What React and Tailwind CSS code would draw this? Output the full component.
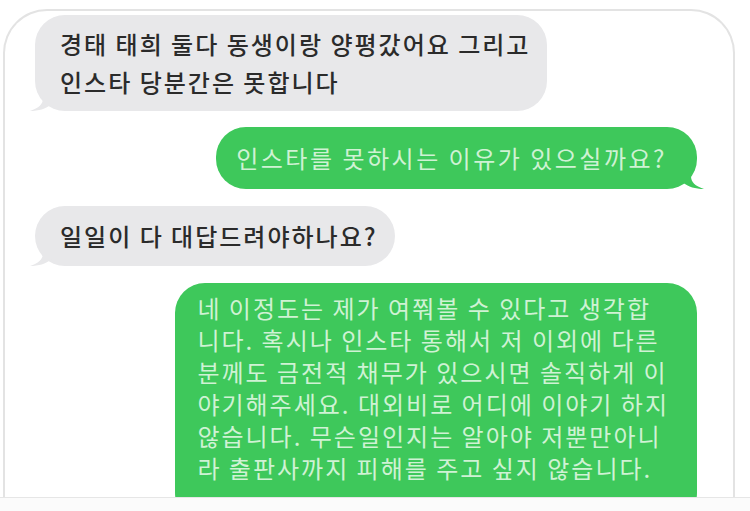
import React from "react";

const font = { fontFamily: '"Noto Sans CJK KR", "Noto Sans", sans-serif' };

const Tail = ({ color, side }) => (
    <svg
        width="24"
        height="22"
        viewBox="0 0 24 22"
        className={
            side === "left"
                ? "absolute -left-[6px] -bottom-[1px]"
                : "absolute -right-[8px] -bottom-[1px] -scale-x-100"
        }
    >
        <path d="M14 0 L14 8 C14 14 10 18 1 21 C10 21 16 19 23 14 L23 0 Z" fill={color} />
    </svg>
);

const Received = ({ lines, className = "" }) => (
    <div className={`relative self-start rounded-[30px] bg-[#e8e8ea] pl-[25px] pr-[17px] text-[24px] font-medium leading-[38px] tracking-[2px] text-[#2b2b2b] ${className}`}>
        {lines.map((l) => (
            <div key={l} className="whitespace-nowrap">{l}</div>
        ))}
        <Tail color="#e8e8ea" side="left" />
    </div>
);

const Sent = ({ lines, className = "", tail = true }) => (
    <div className={`relative self-end rounded-[30px] bg-[#3ec85b] text-[#cff2d4] ${className}`}>
        {lines.map((l) => (
            <div key={l} className="whitespace-nowrap">{l}</div>
        ))}
        {tail && <Tail color="#3ec85b" side="right" />}
    </div>
);

export default function App() {
    return (
        <div className="flex h-[511px] w-[750px] flex-col overflow-hidden bg-white" style={font}>
            <div className="ml-[3px] mt-[9px] h-[488px] w-[732px] overflow-hidden rounded-t-[44px] border-2 border-b-0 border-[#e3e3e3]">
                <div className="flex flex-col pl-[30px] pr-[36px] pt-[4px]">
                    <Received
                        className="py-[10px]"
                        lines={["경태 태희 둘다 동생이랑 양평갔어요 그리고", "인스타 당분간은 못합니다"]}
                    />
                    <Sent
                        className="mt-[16px] py-[12px] pl-[20px] pr-[30px] text-[24px] leading-[38px] tracking-[2.5px]"
                        lines={["인스타를 못하시는 이유가 있으실까요?"]}
                    />
                    <Received className="mt-[17px] py-[11px]" lines={["일일이 다 대답드려야하나요?"]} />
                    <Sent
                        tail={false}
                        className="mt-[17px] h-[240px] pt-[9px] pl-[22px] pr-[28px] text-[24px] leading-[32px] tracking-[2px]"
                        lines={[
                            "네 이정도는 제가 여쭤볼 수 있다고 생각합",
                            "니다. 혹시나 인스타 통해서 저 이외에 다른",
                            "분께도 금전적 채무가 있으시면 솔직하게 이",
                            "야기해주세요. 대외비로 어디에 이야기 하지",
                            "않습니다. 무슨일인지는 알아야 저뿐만아니",
                            "라 출판사까지 피해를 주고 싶지 않습니다.",
                        ]}
                    />
                </div>
            </div>
            <div className="flex-1 border-t border-[#e6e6e6] bg-[#fbfbfb]" />
        </div>
    );
}
